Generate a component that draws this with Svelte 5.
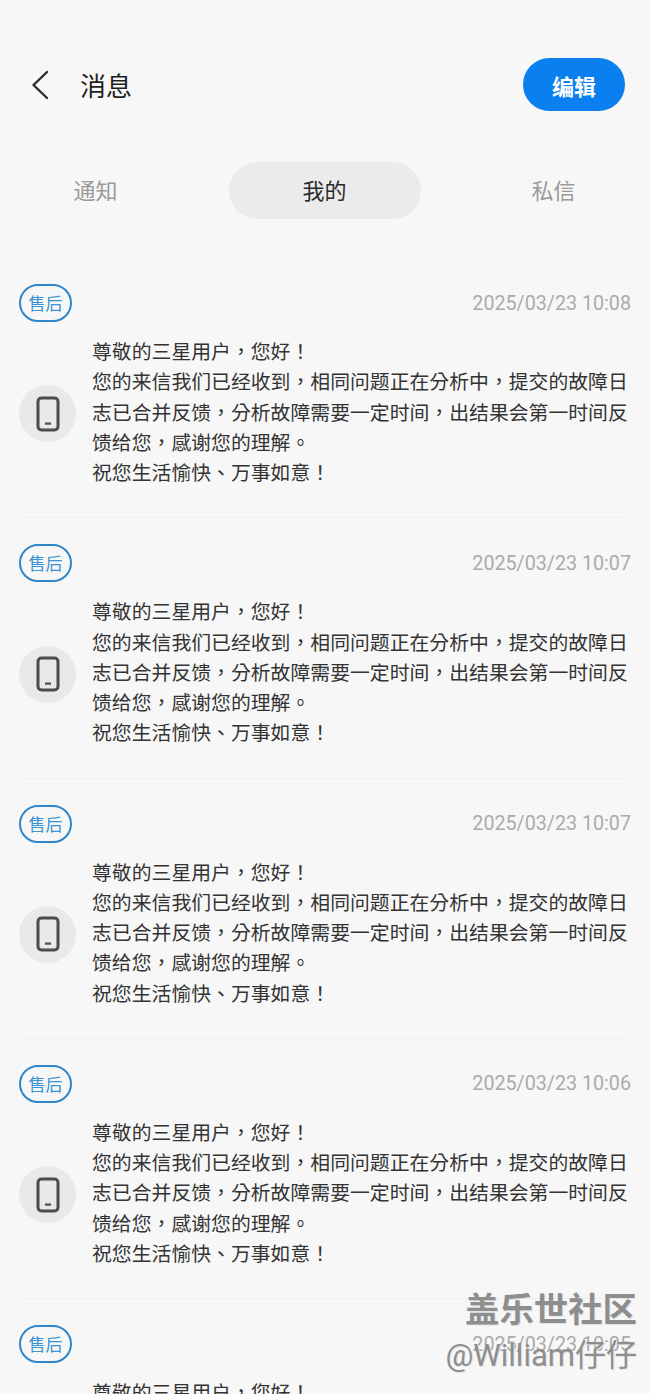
<script>
  const tabs = ['通知', '我的', '私信'];
  const messages = [
    { time: '2025/03/23 10:08' },
    { time: '2025/03/23 10:07' },
    { time: '2025/03/23 10:07' },
    { time: '2025/03/23 10:06' },
    { time: '2025/03/23 10:05' }
  ];
  const lines = [
    '尊敬的三星用户，您好！',
    '您的来信我们已经收到，相同问题正在分析中，提交的故障日',
    '志已合并反馈，分析故障需要一定时间，出结果会第一时间反',
    '馈给您，感谢您的理解。',
    '祝您生活愉快、万事如意！'
  ];
</script>

<div class="page">
  <header class="topbar">
    <button class="back" aria-label="返回">
      <svg width="20" height="30" viewBox="0 0 20 30">
        <path d="M17 2 L3.5 15 L17 28" fill="none" stroke="#2b2b2b" stroke-width="2.4" stroke-linecap="round" stroke-linejoin="round" />
      </svg>
    </button>
    <h1>消息</h1>
    <button class="edit">编辑</button>
  </header>

  <nav class="tabs">
    {#each tabs as tab, i}
      <div class="tab" class:active={i === 1}>{tab}</div>
    {/each}
  </nav>

  <div class="list">
    {#each messages as msg}
      <article class="item">
        <div class="meta">
          <span class="badge">售后</span>
          <span class="time">{msg.time}</span>
        </div>
        <div class="body">
          <div class="avatar">
            <svg width="24" height="36" viewBox="0 0 24 36">
              <rect x="2" y="2" width="20" height="32" rx="3.5" fill="none" stroke="#4c4c4c" stroke-width="3" />
              <rect x="9" y="26.5" width="6" height="2.2" fill="#4c4c4c" />
            </svg>
          </div>
          <div class="text">
            {#each lines as line}
              <div class="line">{line}</div>
            {/each}
          </div>
        </div>
        <div class="divider"></div>
      </article>
    {/each}
  </div>

  <div class="watermark">
    <div class="wm-site">盖乐世社区</div>
    <div class="wm-user">@William仔仔</div>
  </div>
</div>

<style>
  :global(body) {
    margin: 0;
    background: #f7f7f7;
  }

  .page {
    position: relative;
    height: 1394px;
    overflow: hidden;
    background: #f7f7f7;
    font-family: "Roboto", "Noto Sans CJK SC", sans-serif;
  }

  button {
    border: none;
    padding: 0;
    background: none;
    font-family: inherit;
  }

  .topbar {
    display: flex;
    align-items: center;
    height: 53px;
    padding: 58px 25px 0 30px;
  }

  .back {
    display: flex;
    width: 50px;
  }

  h1 {
    margin: 0;
    flex: 1;
    font-size: 26px;
    font-weight: 400;
    color: #1f1f1f;
  }

  .edit {
    width: 102px;
    height: 53px;
    border-radius: 27px;
    background: #0a7ff0;
    color: #fff;
    font-size: 22px;
    font-weight: 700;
  }

  .tabs {
    display: grid;
    grid-template-columns: 192px 192px 192px;
    justify-content: center;
    column-gap: 37px;
    margin-top: 51px;
    margin-left: -1px;
  }

  .tab {
    height: 57px;
    line-height: 60px;
    border-radius: 29px;
    text-align: center;
    font-size: 22px;
    color: #9a9a9a;
  }

  .tab.active {
    background: #ebebeb;
    color: #2b2b2b;
  }

  .list {
    margin-top: 65px;
  }

  .item {
    height: 260.3px;
    padding: 0 19px;
    box-sizing: border-box;
  }

  .meta {
    display: flex;
    align-items: center;
    justify-content: space-between;
    height: 38px;
  }

  .badge {
    box-sizing: border-box;
    width: 53px;
    height: 38px;
    line-height: 37px;
    border: 2px solid #2f86c8;
    border-radius: 19px;
    text-align: center;
    font-size: 17px;
    color: #3a93d2;
  }

  .time {
    font-size: 19.7px;
    color: #ababab;
  }

  .body {
    display: flex;
    align-items: center;
    margin-top: 14px;
  }

  .avatar {
    display: flex;
    align-items: center;
    justify-content: center;
    flex-shrink: 0;
    width: 57px;
    height: 57px;
    margin-top: 4px;
    margin-right: 16px;
    border-radius: 50%;
    background: #e9e9e9;
  }

  .text {
    font-family: "Noto Sans CJK TC", "Noto Sans CJK SC", sans-serif;
    font-size: 19.85px;
    line-height: 30.3px;
    color: #333;
  }

  .line {
    white-space: nowrap;
  }

  .divider {
    height: 1px;
    margin: 30px 3px 0 3px;
    background: #efefef;
  }

  .watermark {
    position: absolute;
    right: 13px;
    top: 1290px;
    text-align: right;
    color: #8e8e8e;
    text-shadow: 1px 1px 0 #e4e4e4;
  }

  .wm-site {
    font-size: 34.4px;
    line-height: 40px;
    font-weight: 700;
  }

  .wm-user {
    margin-top: 7px;
    font-size: 31px;
    line-height: 38px;
  }
</style>
